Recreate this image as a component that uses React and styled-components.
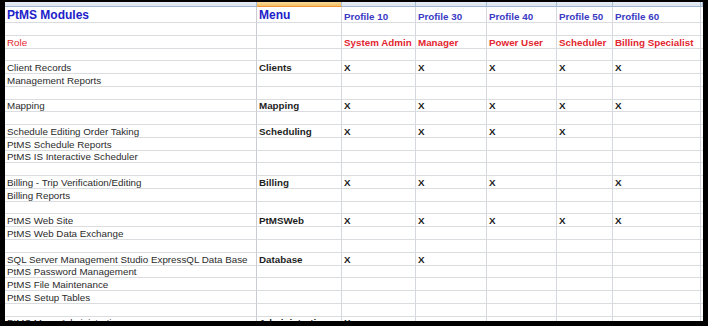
import React from 'react';
import styled, { createGlobalStyle } from 'styled-components';

const GlobalStyle = createGlobalStyle`
  html, body {
    margin: 0;
    padding: 0;
    background: #000;
  }
  body {
    font-family: "Liberation Sans", Arial, sans-serif;
  }
`;

const COLS = '252px 85px 74px 71px 70px 56px 88px 1fr';

const Frame = styled.div`
  margin: 2px 0 0 5px;
  width: 698px;
  height: 319px;
  background: #fff;
  overflow: hidden;
`;

const HeaderStrip = styled.div`
  display: grid;
  grid-template-columns: ${COLS};
  height: 5px;
`;

const HeaderCell = styled.div`
  border-right: 1px solid #a9bdd4;
  border-bottom: 1px solid ${(p) => (p.$active ? '#f29436' : '#9eb6ce')};
  background: ${(p) =>
    p.$active
      ? 'linear-gradient(#f9d99f, #f1c15f)'
      : 'linear-gradient(#e9eef5, #dbe4ee)'};
`;

const Sheet = styled.div`
  display: grid;
  grid-template-columns: ${COLS};
  grid-template-rows: 16px;
  grid-auto-rows: 12.78px;
`;

const toneColor = {
  title: '#2121c9',
  profile: '#3a3ac4',
  role: '#e3262f',
  roleName: '#e3262f',
  menu: '#1e1e1e',
  x: '#1a1a1a',
  plain: '#2b2b2b',
};

const Cell = styled.div`
  display: flex;
  align-items: flex-end;
  padding: 0 0 ${(p) => (p.$tone === 'title' ? '0' : '0')} 2px;
  box-sizing: border-box;
  border-right: 1px solid ${(p) => (p.$first ? '#c9ccd1' : '#d5d8dc')};
  border-bottom: 1px solid #dadcdf;
  white-space: nowrap;
  font-size: ${(p) => (p.$tone === 'title' ? '12px' : '9.8px')};
  line-height: ${(p) => (p.$tone === 'title' ? '14px' : '11px')};
  font-weight: ${(p) => (p.$tone === 'plain' || p.$tone === 'role' ? 400 : 700)};
  color: ${(p) => toneColor[p.$tone] || '#2b2b2b'};
`;

const profiles = ['Profile 10', 'Profile 30', 'Profile 40', 'Profile 50', 'Profile 60'];
const roles = ['System Admin', 'Manager', 'Power User', 'Scheduler', 'Billing Specialist'];

const blank = {};
const rows = [
  { kind: 'title' },
  blank,
  { kind: 'role' },
  blank,
  { a: 'Client Records', b: 'Clients', x: [1, 1, 1, 1, 1] },
  { a: 'Management Reports' },
  blank,
  { a: 'Mapping', b: 'Mapping', x: [1, 1, 1, 1, 1] },
  blank,
  { a: 'Schedule Editing Order Taking', b: 'Scheduling', x: [1, 1, 1, 1, 0] },
  { a: 'PtMS Schedule Reports' },
  { a: 'PtMS IS Interactive Scheduler' },
  blank,
  { a: 'Billing - Trip Verification/Editing', b: 'Billing', x: [1, 1, 1, 0, 1] },
  { a: 'Billing Reports' },
  blank,
  { a: 'PtMS Web Site', b: 'PtMSWeb', x: [1, 1, 1, 1, 1] },
  { a: 'PtMS Web Data Exchange' },
  blank,
  { a: 'SQL Server Management Studio ExpressQL Data Base', b: 'Database', x: [1, 1, 0, 0, 0] },
  { a: 'PtMS Password Management' },
  { a: 'PtMS File Maintenance' },
  { a: 'PtMS Setup Tables' },
  blank,
  { a: 'PtMS Menu Administration', b: 'Administration', x: [1, 0, 0, 0, 0] },
  blank,
];

function Row({ row }) {
  if (row.kind === 'title') {
    return (
      <>
        <Cell $first $tone="title">PtMS Modules</Cell>
        <Cell $tone="title">Menu</Cell>
        {profiles.map((p) => (
          <Cell key={p} $tone="profile">{p}</Cell>
        ))}
        <Cell />
      </>
    );
  }
  if (row.kind === 'role') {
    return (
      <>
        <Cell $first $tone="role">Role</Cell>
        <Cell />
        {roles.map((r) => (
          <Cell key={r} $tone="roleName">{r}</Cell>
        ))}
        <Cell />
      </>
    );
  }
  const marks = row.x || [0, 0, 0, 0, 0];
  return (
    <>
      <Cell $first $tone="plain">{row.a}</Cell>
      <Cell $tone="menu">{row.b}</Cell>
      {marks.map((m, i) => (
        <Cell key={i} $tone="x">{m ? 'X' : ''}</Cell>
      ))}
      <Cell />
    </>
  );
}

export default function App() {
  return (
    <>
      <GlobalStyle />
      <Frame>
        <HeaderStrip>
          {COLS.split(' ').map((c, i) => (
            <HeaderCell key={i} $active={i === 1} />
          ))}
        </HeaderStrip>
        <Sheet>
          {rows.map((row, i) => (
            <Row key={i} row={row} />
          ))}
        </Sheet>
      </Frame>
    </>
  );
}
